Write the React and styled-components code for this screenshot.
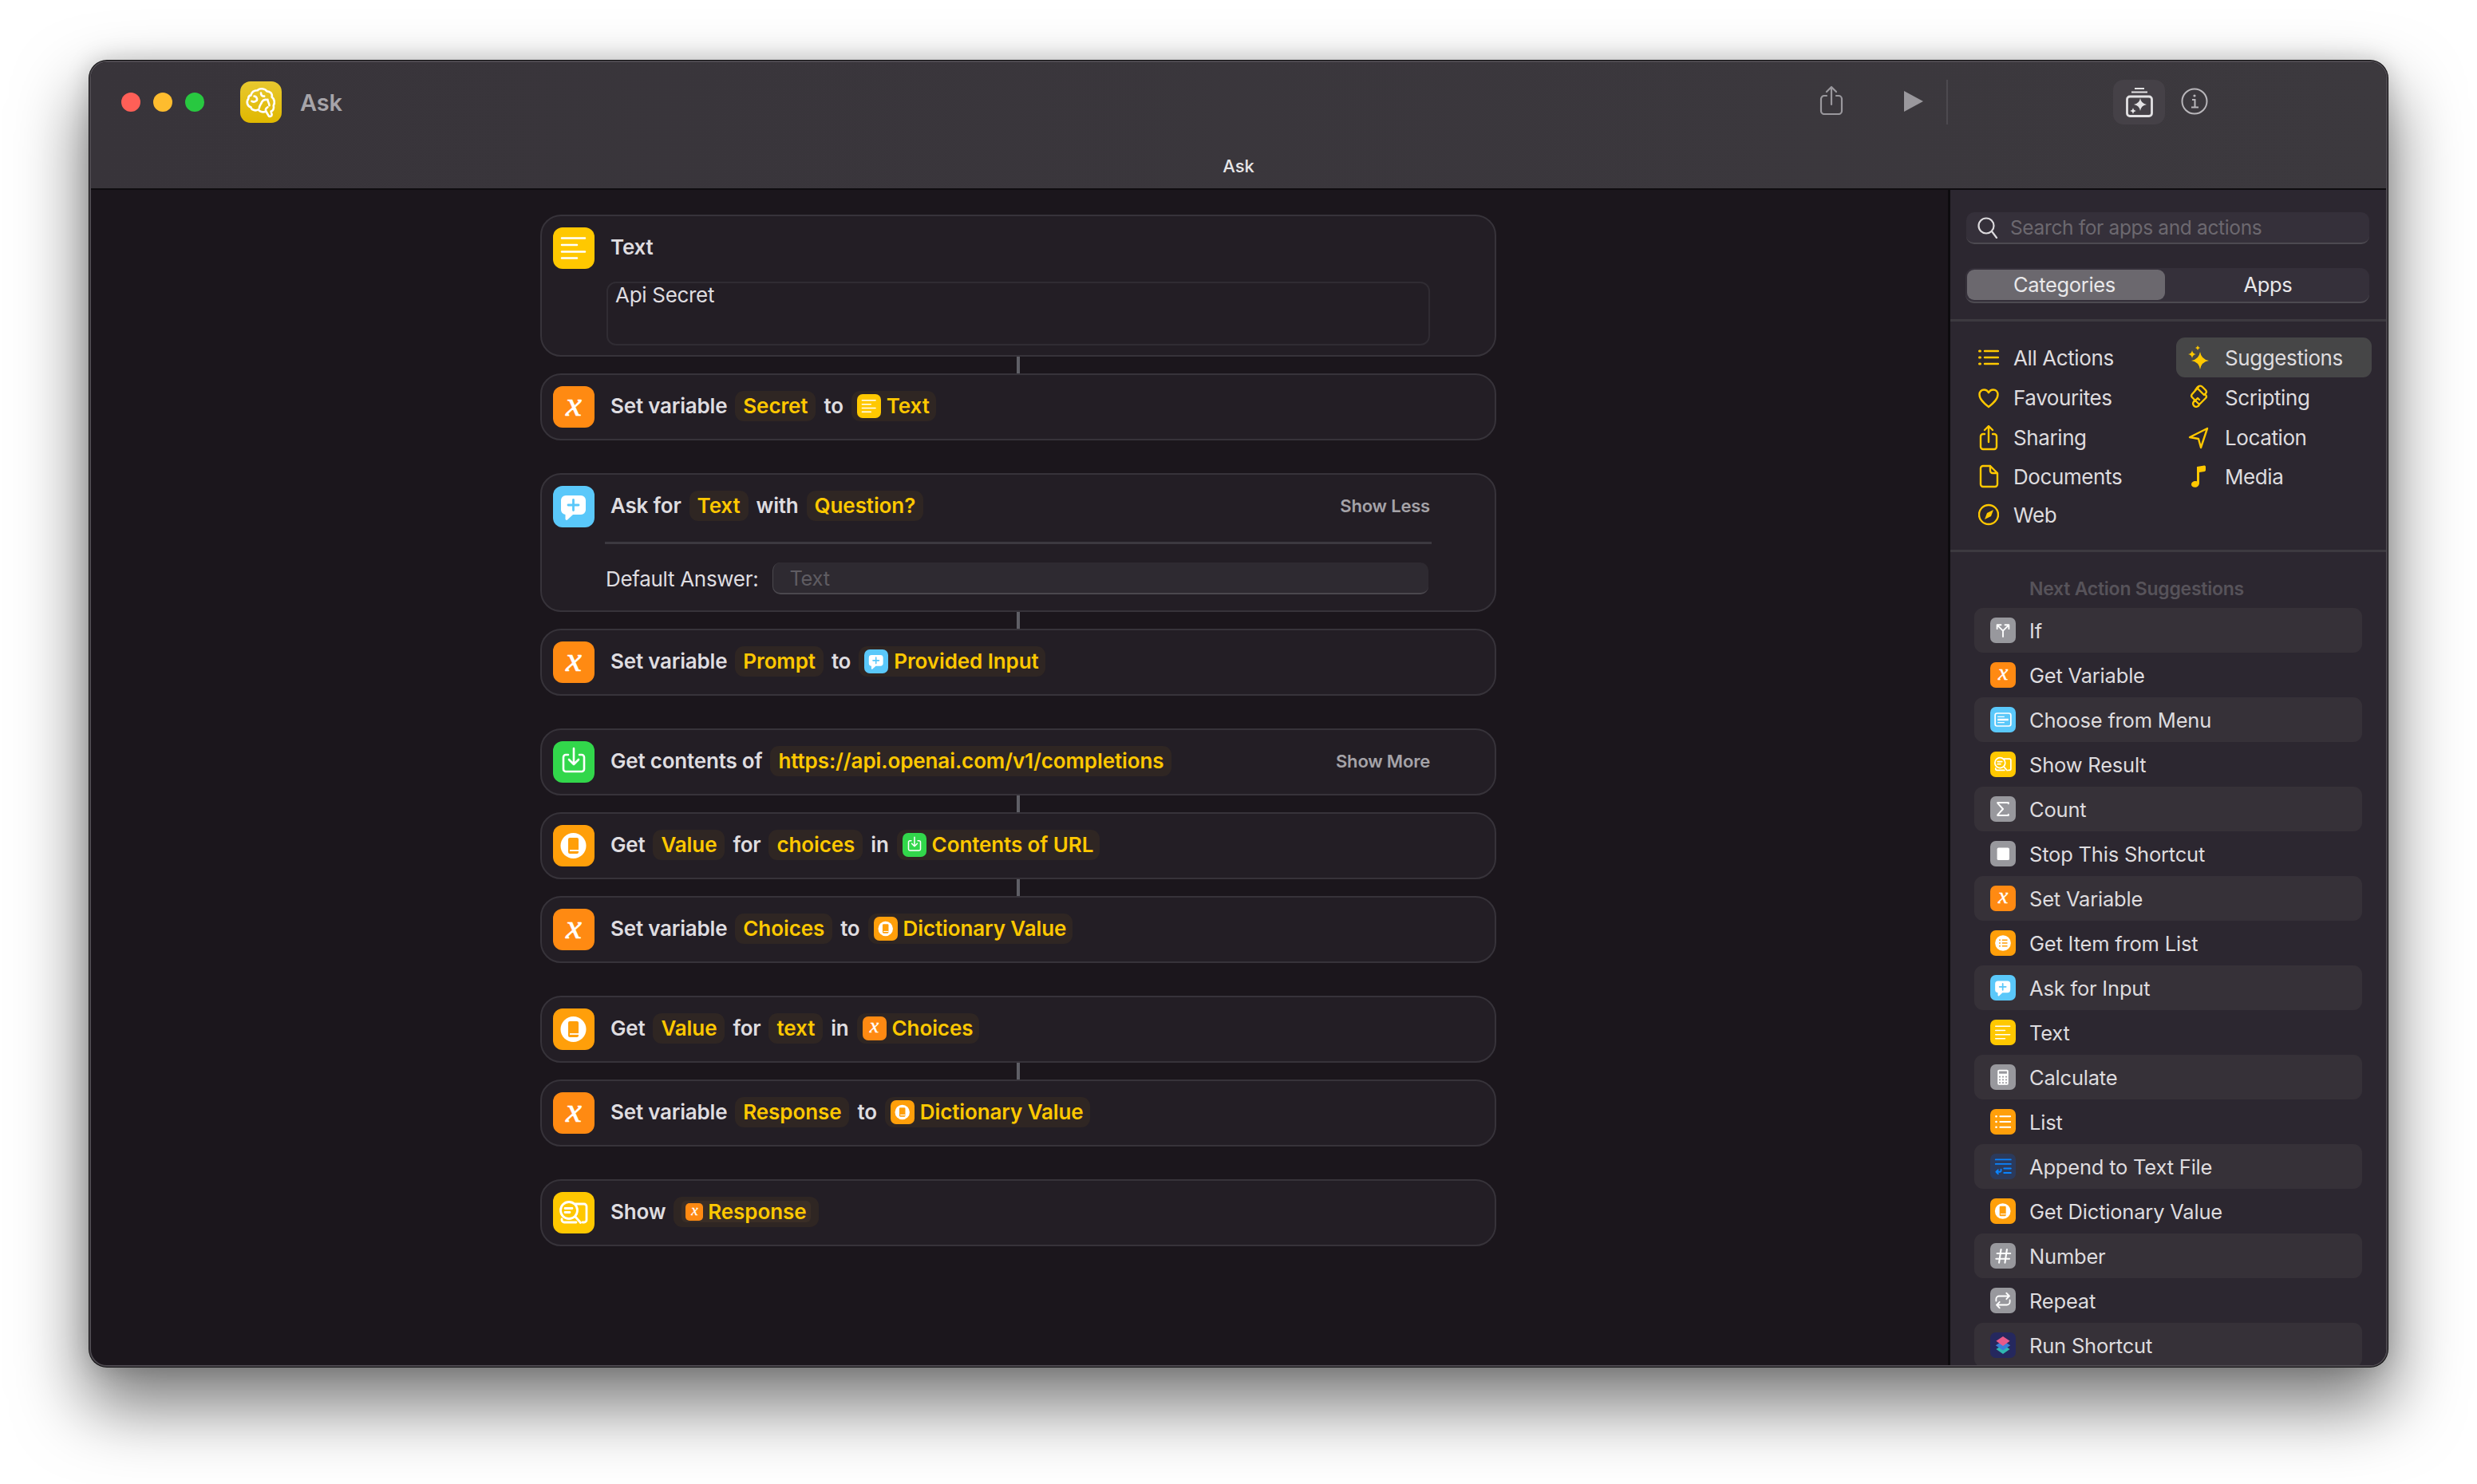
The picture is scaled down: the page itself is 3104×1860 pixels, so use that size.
import React from 'react'
import styled, { createGlobalStyle } from 'styled-components'

const YELLOW = '#ffc800'

const GlobalStyle = createGlobalStyle`
  html, body { margin: 0; padding: 0; background: #fff; }
  body { font-family: Inter, "Liberation Sans", sans-serif; -webkit-font-smoothing: antialiased; }
  * { box-sizing: border-box; }
`

const Stage = styled.div`
  width: 3104px;
  height: 1860px;
  padding: 76px 112px 147px;
  overflow: hidden;
`

const Window = styled.div`
  width: 100%;
  height: 100%;
  display: flex;
  flex-direction: column;
  border: 2px solid #4d494f;
  border-radius: 22px;
  overflow: hidden;
  background: #1b161c;
  box-shadow: 0 0 0 1px #0c0b0d, 0 44px 86px 6px rgba(0, 0, 0, 0.52), 0 0 30px rgba(0, 0, 0, 0.18);
`

const TitleBar = styled.header`
  height: 160px;
  flex: none;
  padding-top: 22px;
  background: linear-gradient(90deg, #38343a, #3c393e);
  border-bottom: 2px solid #0f0d10;
`

const ToolRow = styled.div`
  height: 56px;
  display: flex;
  align-items: center;
  padding: 0 223px 0 38px;
`

const Lights = styled.div`
  display: flex;
  gap: 16px;
`

const Light = styled.span`
  width: 24px;
  height: 24px;
  border-radius: 50%;
  background: ${p => p.$color};
`

const AppIcon = styled.span`
  width: 52px;
  height: 52px;
  margin-left: 45px;
  border-radius: 13px;
  display: flex;
  align-items: center;
  justify-content: center;
  background: linear-gradient(180deg, #e8c82f, #e0b800);
  color: #fff;
`

const AppName = styled.span`
  margin-left: 23px;
  font-size: 29px;
  font-weight: 600;
  letter-spacing: -0.2px;
  color: #a6a4a9;
`

const ToolSpacer = styled.div`
  flex: 1;
`

const ToolIcon = styled.span`
  display: flex;
  color: ${p => p.$color || '#9a989d'};
  margin-left: ${p => p.$left || 0}px;
  margin-bottom: ${p => p.$lift || 0}px;
`

const ToolDivider = styled.span`
  width: 2px;
  height: 56px;
  margin-left: 28px;
  background: #4d4a50;
`

const ToolButton = styled.span`
  width: 65px;
  height: 56px;
  margin-left: 207px;
  border-radius: 13px;
  display: flex;
  align-items: center;
  justify-content: center;
  background: #454147;
  color: #e3e2e4;
`

const WindowTitle = styled.div`
  margin-top: 40px;
  line-height: 24px;
  text-align: center;
  font-size: 22px;
  font-weight: 500;
  letter-spacing: -0.1px;
  color: #e6e5e7;
`

const Body = styled.div`
  flex: 1;
  min-height: 0;
  display: flex;
`

const Canvas = styled.main`
  flex: 1;
  display: flex;
  flex-direction: column;
  align-items: center;
  padding: 31px 3px 0 0;
`

const Card = styled.section`
  width: 1198px;
  flex: none;
  border: 2px solid #37333a;
  border-radius: 26px;
  background: #231e25;
`

const Row = styled.div`
  height: 80px;
  display: flex;
  align-items: center;
  gap: 10px;
  padding: 0 81px 3px 14px;
`

const Tile = styled.span`
  flex: none;
  display: flex;
  align-items: center;
  justify-content: center;
  width: ${p => p.$size}px;
  height: ${p => p.$size}px;
  border-radius: ${p => Math.round(p.$size * 0.23)}px;
  background: ${p => p.$bg};
  svg { width: 100%; height: 100%; display: block; }
`

const VarX = styled.span`
  font-family: "Liberation Serif", serif;
  font-style: italic;
  font-weight: 400;
  font-size: ${p => Math.round(p.$size * 0.86)}px;
  line-height: ${p => p.$size}px;
  color: #fff;
  -webkit-text-stroke: ${p => p.$size * 0.012}px #fff;
  padding-bottom: ${p => p.$size * 0.16}px;
`

const RowIcon = styled.span`
  display: flex;
  margin: 3px 10px 0 0;
`

const Label = styled.span`
  font-size: 26px;
  font-weight: 600;
  letter-spacing: -0.2px;
  color: #dfdde0;
  white-space: nowrap;
`

const Pill = styled.span`
  height: 38px;
  display: flex;
  align-items: center;
  gap: 7px;
  padding: ${p => (p.$icon ? '0 8px 0 7px' : '0 10px')};
  border-radius: 11px;
  background: #2f2623;
  font-size: 26px;
  font-weight: 600;
  letter-spacing: -0.1px;
  color: ${YELLOW};
  white-space: nowrap;
`

const InnerPill = styled.span`
  height: 27px;
  display: flex;
  align-items: center;
  gap: 6px;
  padding: 0 6px 0 5px;
  border-radius: 6px;
  background: #3a2e26;
`

const ShowToggle = styled.span`
  margin-left: auto;
  font-size: 22px;
  font-weight: 600;
  letter-spacing: -0.2px;
  color: #a5a3a8;
`

const Connector = styled.div`
  width: 4px;
  height: 21px;
  flex: none;
  background: #5f5f66;
`

const CardGap = styled.div`
  height: 41px;
  flex: none;
`

const TextBox = styled.div`
  height: 80px;
  margin: 2px 81px 12px;
  padding: 3px 9px;
  border: 2px solid #302c33;
  border-radius: 12px;
  font-size: 26px;
  line-height: 24px;
  letter-spacing: -0.3px;
  color: #dfdde0;
`

const CardRule = styled.div`
  height: 3px;
  margin: 4px 79px 0 79px;
  background: #3c3940;
`

const FieldRow = styled.div`
  display: flex;
  align-items: center;
  gap: 18px;
  height: 40px;
  margin: 23px 83px 20px 80px;
`

const FieldLabel = styled.span`
  font-size: 26px;
  letter-spacing: -0.3px;
  color: #dfdde0;
  white-space: nowrap;
`

const Field = styled.div`
  flex: 1;
  height: 40px;
  display: flex;
  align-items: center;
  padding: 0 20px;
  border-radius: 10px;
  background: #2e2a31;
  border-left: 1px solid #4b484e;
  border-bottom: 2px solid #4b484e;
  font-size: 25.5px;
  letter-spacing: -0.3px;
  color: #5f5c62;
`

const Sidebar = styled.aside`
  width: 549px;
  flex: none;
  min-height: 0;
  overflow: hidden;
  background: #2c2730;
  border-left: 3px solid #0d0b0e;
`

const Search = styled.div`
  height: 40px;
  margin: 28px 21px 0 20px;
  padding: 0 14px;
  display: flex;
  align-items: center;
  gap: 15px;
  border-radius: 10px;
  background: #35303a;
  border-bottom: 2px solid #4d4a51;
  font-size: 24.5px;
  letter-spacing: -0.35px;
  color: #6c686f;
  svg { flex: none; color: #dcdadd; }
`

const Segments = styled.div`
  height: 44px;
  margin: 30px 21px 0 19px;
  padding: 2px;
  display: flex;
  border-radius: 11px;
  background: #35303a;
  border-bottom: 2px solid #4d4a51;
`

const Segment = styled.span`
  flex: ${p => (p.$active ? '0 0 248px' : '1')};
  display: flex;
  align-items: center;
  justify-content: center;
  padding: ${p => (p.$active ? '0 4px 2px 0' : '0 0 2px 4px')};
  border-radius: 9px;
  background: ${p => (p.$active ? '#6b686e' : 'transparent')};
  font-size: 25.5px;
  letter-spacing: -0.35px;
  color: #e9e8ea;
`

const SideRule = styled.div`
  height: 3px;
  background: #3d3a40;
  margin-top: ${p => p.$top}px;
`

const Categories = styled.nav`
  display: grid;
  grid-template-columns: 263px 245px;
  grid-template-rows: 50px 51px 49px 48px 48px;
  margin: 20px 0 0 20px;
`

const Category = styled.div`
  display: flex;
  align-items: center;
  gap: ${p => (p.$right ? 20 : 18)}px;
  padding-left: 15px;
  border-radius: 11px;
  background: ${p => (p.$active ? '#464647' : 'transparent')};
  font-size: 26px;
  letter-spacing: -0.4px;
  color: #dedcdf;
  svg { flex: none; color: ${YELLOW}; }
`

const SectionLabel = styled.div`
  margin: 31px 0 9px 99px;
  line-height: 30px;
  font-size: 23px;
  font-weight: 600;
  letter-spacing: -0.25px;
  color: #57535a;
`

const ActionList = styled.div`
  margin-left: 30px;
  width: 486px;
`

const ActionRow = styled.div`
  height: 56px;
  display: flex;
  align-items: center;
  gap: 17px;
  padding-left: 20px;
  border-radius: 11px;
  background: ${p => (p.$filled ? '#363138' : 'transparent')};
  font-size: 25.5px;
  letter-spacing: -0.2px;
  color: #dedcdf;
`

// glyphs for the action tiles, all on a 52 grid
const Strokes = ({ children, w = 2.6, color = '#fff' }) => (
  <svg viewBox="0 0 52 52" fill="none" stroke={color} strokeWidth={w} strokeLinecap="round" strokeLinejoin="round">
    {children}
  </svg>
)

const glyphs = {
  text: () => (
    <Strokes><path d="M11 13.5h29M11 22h19M11 30.5h29M11 38.5h19" /></Strokes>
  ),
  ask: () => (
    <svg viewBox="0 0 52 52">
      <path fill="#fff" d="M16 12h19a6 6 0 0 1 6 6v12a6 6 0 0 1-6 6H25l-7 6.500a1.500 1.500 0 0 1-2.500-1V36A6 6 0 0 1 10 30V18a6 6 0 0 1 6-6z" />
      <path stroke="#5ac8fa" strokeWidth="2.800" strokeLinecap="round" d="M25.500 17.500v13M19 24h13" />
    </svg>
  ),
  download: () => (
    <Strokes>
      <path d="M19 17h-3a3 3 0 0 0-3 3v15a3 3 0 0 0 3 3h20a3 3 0 0 0 3-3V20a3 3 0 0 0-3-3h-3" />
      <path d="M26 9v20M20 23l6 6 6-6" />
    </Strokes>
  ),
  dict: () => (
    <svg viewBox="0 0 52 52">
      <circle cx="25.500" cy="26" r="16" fill="#fff" />
      <rect x="19" y="16" width="13" height="20" rx="2" fill="#ff9f0a" />
      <path d="M21 32h11" stroke="#fff" strokeWidth="1.800" />
    </svg>
  ),
  show: () => (
    <Strokes w={2.8}>
      <path d="M28 15h11a3 3 0 0 1 3 3v17a3 3 0 0 1-3 3h-2" />
      <circle cx="20" cy="23" r="10.500" />
      <path d="M28 31l6.500 7.500M15 20.500h9M15 25.500h6M11 34v1a3 3 0 0 0 3 3h15" />
    </Strokes>
  ),
  fork: () => (
    <Strokes w={3}>
      <path d="M26 39V27l-11-11M26 27l11-11M14 23v-8h8M38 23v-8h-8" />
    </Strokes>
  ),
  menu: () => (
    <svg viewBox="0 0 52 52">
      <rect x="10" y="13" width="32" height="26" rx="4" fill="none" stroke="#fff" strokeWidth="2.800" />
      <path d="M15 20h14M15 32h14" stroke="#fff" strokeWidth="2" />
      <rect x="15" y="24" width="22" height="4" fill="#fff" />
    </svg>
  ),
  sigma: () => (
    <Strokes w={3.2}>
      <path d="M37 15V13H15v1l11 12-11 12v1h22v-2" />
    </Strokes>
  ),
  stop: () => (
    <svg viewBox="0 0 52 52"><rect x="14" y="14" width="25" height="25" rx="3" fill="#fff" /></svg>
  ),
  listCircle: () => (
    <svg viewBox="0 0 52 52">
      <circle cx="26" cy="26" r="16" fill="#fff" />
      <path d="M18 20h3M24 20h11M18 26h3M24 26h11M18 32h3M24 32h11" stroke="#ff9f0a" strokeWidth="2.400" />
    </svg>
  ),
  calc: () => (
    <svg viewBox="0 0 52 52">
      <rect x="15" y="11" width="22" height="31" rx="3" fill="#fff" />
      <rect x="18" y="14" width="16" height="5" fill="#98989d" />
      <path d="M18 24h3v3h-3zM24.500 24h3v3h-3zM31 24h3v3h-3zM18 30h3v3h-3zM24.500 30h3v3h-3zM31 30h3v3h-3zM18 36h3v3h-3zM24.500 36h3v3h-3zM31 36h3v3h-3z" fill="#98989d" />
    </svg>
  ),
  list: () => (
    <Strokes w={3}>
      <path d="M20 15h21M20 26h21M20 37h21" />
      <path d="M12 15h.5M12 26h.5M12 37h.5" strokeWidth="4" />
    </Strokes>
  ),
  append: () => (
    <Strokes w={3} color="#0a84ff">
      <path d="M11 12h31M11 21h31M28 30h14M28 39h14M22 32v3a2 2 0 0 1-2 2h-8M16 33l-4 4 4 4" />
    </Strokes>
  ),
  hash: () => (
    <Strokes w={3.400}>
      <path d="M22 13l-4 27M34 13l-4 27M14 21h27M12 32h27" />
    </Strokes>
  ),
  repeat: () => (
    <Strokes w={3}>
      <path d="M12 27v-4a6 6 0 0 1 6-6h21M33 11l6 6-6 6M40 25v4a6 6 0 0 1-6 6H13M19 29l-6 6 6 6" />
    </Strokes>
  ),
  shortcut: () => (
    <svg viewBox="0 0 52 52">
      <path fill="#30b8b0" d="M26 25l14 9-14 10-14-10z" />
      <path fill="#3a7fd8" d="M26 17l15 9.500-15 10-15-10z" />
      <path fill="#e85a8a" d="M26 8l14 9.500-14 10-14-10z" />
    </svg>
  ),
}

const tiles = {
  text: { bg: YELLOW, glyph: 'text' },
  variable: { bg: '#ff8a12' },
  ask: { bg: '#5ac8fa', glyph: 'ask' },
  download: { bg: '#32d74b', glyph: 'download' },
  dict: { bg: '#ff9f0a', glyph: 'dict' },
  show: { bg: YELLOW, glyph: 'show' },
  fork: { bg: '#98989d', glyph: 'fork' },
  menu: { bg: '#5ac8fa', glyph: 'menu' },
  sigma: { bg: '#98989d', glyph: 'sigma' },
  stop: { bg: '#98989d', glyph: 'stop' },
  listCircle: { bg: '#ff9f0a', glyph: 'listCircle' },
  calc: { bg: '#98989d', glyph: 'calc' },
  list: { bg: '#ff9f0a', glyph: 'list' },
  append: { bg: '#2b3a5c', glyph: 'append' },
  hash: { bg: '#98989d', glyph: 'hash' },
  repeat: { bg: '#98989d', glyph: 'repeat' },
  shortcut: { bg: '#25285e', glyph: 'shortcut' },
}

const ActionIcon = ({ kind, size = 52 }) => {
  const tile = tiles[kind]
  const Glyph = tile.glyph && glyphs[tile.glyph]
  return (
    <Tile $size={size} $bg={tile.bg}>
      {Glyph ? <Glyph /> : <VarX $size={size}>x</VarX>}
    </Tile>
  )
}

const Lead = ({ kind }) => <RowIcon><ActionIcon kind={kind} /></RowIcon>

const IconPill = ({ kind, children }) => (
  <Pill $icon><ActionIcon kind={kind} size={30} />{children}</Pill>
)

// sidebar category icons
const Line = ({ w, h, children, sw = 2.4 }) => (
  <svg width={w} height={h} viewBox={`0 0 ${w} ${h}`} fill="none" stroke="currentColor" strokeWidth={sw} strokeLinecap="round" strokeLinejoin="round">
    {children}
  </svg>
)

// four pointed star, the control points sit a little off centre so the arms stay thick
const star = (x, y, r) => {
  const k = r * 0.14
  return `M${x} ${y - r}Q${x + k} ${y - k} ${x + r} ${y}Q${x + k} ${y + k} ${x} ${y + r}Q${x - k} ${y + k} ${x - r} ${y}Q${x - k} ${y - k} ${x} ${y - r}Z`
}

const catIcons = {
  all: <Line w={26} h={20}><path d="M1.500 2h1M1.500 10h1M1.500 18h1" strokeWidth="3" /><path d="M8 2h17M8 10h17M8 18h17" /></Line>,
  heart: <Line w={26} h={26}><path d="M13 24C8 20 1.500 15 1.500 8.500 1.500 5 4 2.500 7.200 2.500c2.500 0 4.600 1.300 5.800 3.600 1.200-2.300 3.300-3.600 5.800-3.600 3.200 0 5.700 2.500 5.700 6C24.500 15 18 20 13 24z" /></Line>,
  share: <Line w={26} h={32}><path d="M8 11H6a3 3 0 0 0-3 3v13a3 3 0 0 0 3 3h14a3 3 0 0 0 3-3V14a3 3 0 0 0-3-3h-2M13 21V2M8 6l5-5 5 5" /></Line>,
  doc: <Line w={26} h={30}><path d="M6 2h9l9 9v14a3 3 0 0 1-3 3H6a3 3 0 0 1-3-3V5a3 3 0 0 1 3-3zM15 2v6a3 3 0 0 0 3 3h6" /></Line>,
  web: <Line w={26} h={28}><circle cx="13" cy="14" r="12" /><path d="M19 8l-8 4-3 8 8-4z" fill="currentColor" stroke="none" /></Line>,
  spark: <svg width="26" height="30" viewBox="0 0 26 30" fill="currentColor"><path d={star(15, 19, 11)} /><path d={star(5, 11, 5)} /><path d={star(12, 3, 3)} /></svg>,
  script: <Line w={26} h={34}><path d="M13 3l-8 9a3 3 0 0 0 0 4l9 9M9 7l3-4a4 4 0 0 1 6 0l4 4a3 3 0 0 1 0 4l-2 2-9-9M14 25a4 4 0 1 1-5-5l3-3 2 2M14 25l8-8a3 3 0 0 0 0-4" /></Line>,
  location: <Line w={26} h={28}><path d="M24 2L2 13l11 2 3 11z" /></Line>,
  music: <svg width="26" height="28" viewBox="0 0 26 28" fill="currentColor"><path d="M11 2l9-1.500c1-.2 2 .5 2 1.500v4c0 1-.7 1.700-1.500 1.900L14 9v13.500c0 3-2.500 5.300-5.500 5.300C6 27.800 4 26.500 4 24.300c0-2.500 2.300-4.300 5-4.300 .7 0 1.400.1 2 .3z" /></svg>,
}

const categories = [
  { id: 'all', name: 'All Actions' },
  { id: 'spark', name: 'Suggestions', active: true, right: true },
  { id: 'heart', name: 'Favourites' },
  { id: 'script', name: 'Scripting', right: true },
  { id: 'share', name: 'Sharing' },
  { id: 'location', name: 'Location', right: true },
  { id: 'doc', name: 'Documents' },
  { id: 'music', name: 'Media', right: true },
  { id: 'web', name: 'Web' },
]

const suggestions = [
  ['fork', 'If'],
  ['variable', 'Get Variable'],
  ['menu', 'Choose from Menu'],
  ['show', 'Show Result'],
  ['sigma', 'Count'],
  ['stop', 'Stop This Shortcut'],
  ['variable', 'Set Variable'],
  ['listCircle', 'Get Item from List'],
  ['ask', 'Ask for Input'],
  ['text', 'Text'],
  ['calc', 'Calculate'],
  ['list', 'List'],
  ['append', 'Append to Text File'],
  ['dict', 'Get Dictionary Value'],
  ['hash', 'Number'],
  ['repeat', 'Repeat'],
  ['shortcut', 'Run Shortcut'],
]

const BrainMark = () => (
  <svg width="42" height="42" viewBox="0 0 40 40" fill="none" stroke="currentColor" strokeWidth="2.500" strokeLinecap="round" strokeLinejoin="round">
    <path d="M8 12C9 7 13 6 16 6c2-3 9-2.500 11 1 4 0 7 3 6 7 3 2 4 7 2 10 1 4-1 7-3 7l1 4c0 2-3 3-4 1l-3-5c-4 2-8 0-9-2-4 2-9 0-9-3-4-1-6-6-3-10 0-2 1-4 3-4z" />
    <path d="M12 13c2 0 4 2 3 5M9 19c2 1 4 1 6-1M20 9c0 3 2 4 4 4M18 27c0-3 2-4 3-7 1-2 3-3 5-3M28 17c0 3 2 4 2 7M26 31c-1-2 0-4 2-5" />
  </svg>
)

const App = () => (
  <Stage>
    <GlobalStyle />
    <Window>
      <TitleBar>
        <ToolRow>
          <Lights>
            <Light $color="#ff5f57" />
            <Light $color="#febc2e" />
            <Light $color="#28c840" />
          </Lights>
          <AppIcon><BrainMark /></AppIcon>
          <AppName>Ask</AppName>
          <ToolSpacer />
          <ToolIcon $lift={5} $left={2}>
            <Line w={30} h={37} sw={2.2}><path d="M9 13H6a4 4 0 0 0-4 4v15a4 4 0 0 0 4 4h18a4 4 0 0 0 4-4V17a4 4 0 0 0-4-4h-3M15 24V2M9 8l6-6 6 6" /></Line>
          </ToolIcon>
          <ToolIcon $left={75} $lift={2}>
            <svg width="26" height="28" viewBox="0 0 26 28" fill="currentColor"><path d="M1 1l24 13L1 27z" /></svg>
          </ToolIcon>
          <ToolDivider />
          <ToolButton>
            <svg width="36" height="38" viewBox="0 0 36 38" fill="none" stroke="currentColor" strokeWidth="2.400">
              <path d="M12 2h12M8 6.500h20" strokeWidth="2" />
              <rect x="2.500" y="12" width="31" height="24.500" rx="3.500" strokeWidth="2.800" />
              <path d={star(19, 22, 8)} fill="currentColor" stroke="none" />
              <path d={star(10, 30, 4)} fill="currentColor" stroke="none" />
            </svg>
          </ToolButton>
          <ToolIcon $left={20} $color="#b8b6ba" $lift={3}>
            <svg width="34" height="34" viewBox="0 0 34 34" fill="none" stroke="currentColor" strokeWidth="2">
              <circle cx="17" cy="17" r="15.500" />
              <path d="M14 15h3.500v9M13 24.500h9" />
              <circle cx="17" cy="10" r="1.600" fill="currentColor" stroke="none" />
            </svg>
          </ToolIcon>
        </ToolRow>
        <WindowTitle>Ask</WindowTitle>
      </TitleBar>
      <Body>
        <Canvas>
          <Card>
            <Row><Lead kind="text" /><Label>Text</Label></Row>
            <TextBox>Api Secret</TextBox>
          </Card>
          <Connector />
          <Card>
            <Row>
              <Lead kind="variable" /><Label>Set variable</Label><Pill>Secret</Pill><Label>to</Label>
              <IconPill kind="text">Text</IconPill>
            </Row>
          </Card>
          <CardGap />
          <Card>
            <Row>
              <Lead kind="ask" /><Label>Ask for</Label><Pill>Text</Pill><Label>with</Label><Pill>Question?</Pill>
              <ShowToggle>Show Less</ShowToggle>
            </Row>
            <CardRule />
            <FieldRow>
              <FieldLabel>Default Answer:</FieldLabel>
              <Field>Text</Field>
            </FieldRow>
          </Card>
          <Connector />
          <Card>
            <Row>
              <Lead kind="variable" /><Label>Set variable</Label><Pill>Prompt</Pill><Label>to</Label>
              <IconPill kind="ask">Provided Input</IconPill>
            </Row>
          </Card>
          <CardGap />
          <Card>
            <Row>
              <Lead kind="download" /><Label>Get contents of</Label><Pill>https://api.openai.com/v1/completions</Pill>
              <ShowToggle>Show More</ShowToggle>
            </Row>
          </Card>
          <Connector />
          <Card>
            <Row>
              <Lead kind="dict" /><Label>Get</Label><Pill>Value</Pill><Label>for</Label><Pill>choices</Pill><Label>in</Label>
              <IconPill kind="download">Contents of URL</IconPill>
            </Row>
          </Card>
          <Connector />
          <Card>
            <Row>
              <Lead kind="variable" /><Label>Set variable</Label><Pill>Choices</Pill><Label>to</Label>
              <IconPill kind="dict">Dictionary Value</IconPill>
            </Row>
          </Card>
          <CardGap />
          <Card>
            <Row>
              <Lead kind="dict" /><Label>Get</Label><Pill>Value</Pill><Label>for</Label><Pill>text</Pill><Label>in</Label>
              <IconPill kind="variable">Choices</IconPill>
            </Row>
          </Card>
          <Connector />
          <Card>
            <Row>
              <Lead kind="variable" /><Label>Set variable</Label><Pill>Response</Pill><Label>to</Label>
              <IconPill kind="dict">Dictionary Value</IconPill>
            </Row>
          </Card>
          <CardGap />
          <Card>
            <Row>
              <Lead kind="show" /><Label>Show</Label>
              <Pill>
                <InnerPill><ActionIcon kind="variable" size={22} />Response</InnerPill>
              </Pill>
            </Row>
          </Card>
        </Canvas>
        <Sidebar>
          <Search>
            <svg width="26" height="28" viewBox="0 0 26 28" fill="none" stroke="currentColor" strokeWidth="2.200" strokeLinecap="round">
              <circle cx="11" cy="12" r="9.500" />
              <path d="M18 19l6 8" />
            </svg>
            Search for apps and actions
          </Search>
          <Segments>
            <Segment $active>Categories</Segment>
            <Segment>Apps</Segment>
          </Segments>
          <SideRule $top={20} />
          <Categories>
            {categories.map(c => (
              <Category key={c.id} $active={c.active} $right={c.right}>{catIcons[c.id]}{c.name}</Category>
            ))}
          </Categories>
          <SideRule $top={20} />
          <SectionLabel>Next Action Suggestions</SectionLabel>
          <ActionList>
            {suggestions.map(([kind, name], i) => (
              <ActionRow key={name} $filled={i % 2 === 0}>
                <ActionIcon kind={kind} size={32} />
                {name}
              </ActionRow>
            ))}
          </ActionList>
        </Sidebar>
      </Body>
    </Window>
  </Stage>
)

export default App
